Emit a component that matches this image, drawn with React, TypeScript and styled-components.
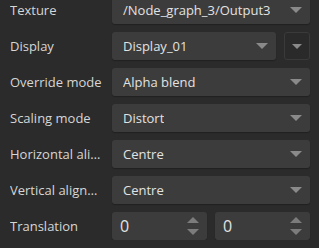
import React from 'react'
import styled, { createGlobalStyle } from 'styled-components'

const Global = createGlobalStyle`
  html, body {
    margin: 0;
    padding: 0;
    background: #2b2b2b;
    overflow: hidden;
  }
  body {
    font-family: "Open Sans", "Noto Sans", sans-serif;
  }
`

interface Row {
  label: string
  value: string
  extra?: boolean
}

const rows: Row[] = [
  { label: 'Texture', value: '/Node_graph_3/Output3' },
  { label: 'Display', value: 'Display_01', extra: true },
  { label: 'Override mode', value: 'Alpha blend' },
  { label: 'Scaling mode', value: 'Distort' },
  { label: 'Horizontal alignment', value: 'Centre' },
  { label: 'Vertical alignment', value: 'Centre' },
]

const Caret = ({ size = 12 }: { size?: number }) => (
  <svg width={size} height={size / 2} viewBox="0 0 12 6">
    <path d="M0 0 L12 0 L6 6 Z" fill="#8a8a8a" />
  </svg>
)

const SpinArrows = () => (
  <svg width="12" height="18" viewBox="0 0 12 18">
    <path d="M0 6 L6 0 L12 6 Z" fill="#7c7c7c" />
    <path d="M0 12 L12 12 L6 18 Z" fill="#7c7c7c" />
  </svg>
)

export default function App() {
  return (
    <>
      <Global />
      <Panel>
        {rows.map(r => (
          <React.Fragment key={r.label}>
            <Label>{r.label}</Label>
            <Field>
              <Select>
                <Value>{r.value}</Value>
                <Caret />
              </Select>
              {r.extra && (
                <MenuButton>
                  <Caret size={10} />
                </MenuButton>
              )}
            </Field>
          </React.Fragment>
        ))}
        <Label>Translation</Label>
        <Field>
          <Spin>
            <Value>0</Value>
            <SpinArrows />
          </Spin>
          <Spin>
            <Value>0</Value>
            <SpinArrows />
          </Spin>
        </Field>
      </Panel>
    </>
  )
}

const Panel = styled.div`
  display: grid;
  grid-template-columns: 102px 1fr;
  grid-auto-rows: 28px;
  row-gap: 8px;
  margin-top: -4px;
  padding: 0 9px 0 10px;
  width: 319px;
  box-sizing: border-box;
`

const Label = styled.div`
  line-height: 28px;
  color: #d6d6d6;
  font-size: 13px;
  white-space: nowrap;
  overflow: hidden;
  text-overflow: ellipsis;
  margin-right: 6px;
  min-width: 0;
`

const Field = styled.div`
  display: flex;
  gap: 8px;
  min-width: 0;
`

const Select = styled.div`
  flex: 1;
  display: flex;
  align-items: center;
  justify-content: space-between;
  background: #3c3c3c;
  border-radius: 3px;
  padding: 0 8px 0 11px;
  min-width: 0;
  box-shadow: 0 1px 1px rgba(0, 0, 0, 0.25);
`

const Value = styled.span`
  color: #e2e2e2;
  font-size: 13px;
  white-space: nowrap;
  overflow: hidden;
`

const MenuButton = styled.div`
  width: 26px;
  flex: none;
  display: flex;
  align-items: center;
  justify-content: center;
  background: #2a2a2a;
  border: 1px solid #3a3a3a;
  border-radius: 3px;
  box-sizing: border-box;
`

const Spin = styled(Select)`
  padding: 0 8px 0 8px;
  ${Value} {
    font-size: 16px;
  }
`
